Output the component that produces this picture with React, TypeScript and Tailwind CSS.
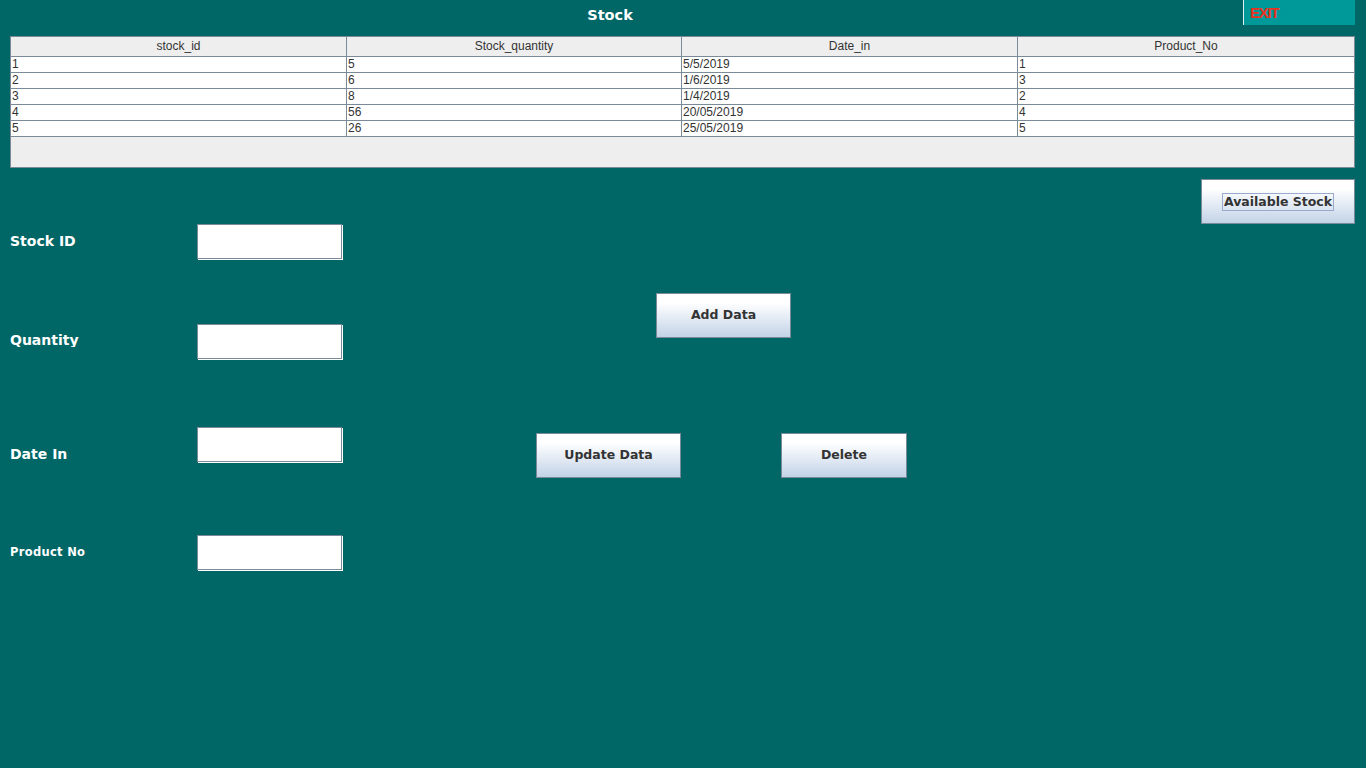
import React from "react";

const rows = [
  ["1", "5", "5/5/2019", "1"],
  ["2", "6", "1/6/2019", "3"],
  ["3", "8", "1/4/2019", "2"],
  ["4", "56", "20/05/2019", "4"],
  ["5", "26", "25/05/2019", "5"],
];

const headers = ["stock_id", "Stock_quantity", "Date_in", "Product_No"];

const btn =
  "border border-[#7a8a99] bg-gradient-to-b from-white from-20% to-[#c3d3e7] font-bold text-[#333333] [font-family:'DejaVu_Sans',sans-serif]";

const Field = ({ label, labelClass = "" }: { label: string; labelClass?: string }) => (
  <div className="flex h-[35px] items-center">
    <div className={`w-[197px] shrink-0 pl-[10px] font-bold text-white [font-family:'DejaVu_Sans',sans-serif] ${labelClass}`}>{label}</div>
    <input className="h-[35px] w-[145px] shrink-0 border border-[#7a8a99] bg-white shadow-[1px_1px_0_#ffffff] outline-none" />
  </div>
);

export default function App() {
  return (
    <div className="h-[768px] w-[1366px] overflow-hidden bg-[#006666] [font-family:'Liberation_Sans',Arial,sans-serif]">
      {/* title bar */}
      <div className="flex h-[36px]">
        <div className="w-[1243px] pr-[23px] pt-[5px] text-center text-[14.5px] font-bold text-white [font-family:'DejaVu_Sans',sans-serif]">Stock</div>
        <button className="h-[25px] w-[112px] border-l border-[#e6f2f2] bg-[#009999] pl-[6px] text-left text-[15px] font-bold leading-[25px] tracking-[-1.2px] text-[#e8321e]">
          EXIT
        </button>
      </div>

      {/* table */}
      <div className="mx-[10px] h-[132px] w-[1345px] border border-[#7a8a99] bg-[#eeeeee]">
        <div className="grid h-[20px] grid-cols-[336px_335px_336px_1fr] border-b border-[#7a8a99] bg-[#eeeeee]">
          {headers.map((h, i) => (
            <div key={h} className={`text-center text-[12px] leading-[19px] text-[#333333] ${i < 3 ? "border-r border-[#7a8a99]" : ""}`}>
              {h}
            </div>
          ))}
        </div>
        {rows.map((r) => (
          <div key={r[0]} className="grid h-[16px] grid-cols-[336px_335px_336px_1fr] border-b border-[#7a8a99] bg-white">
            {r.map((c, i) => (
              <div key={i} className={`pl-[1px] text-[12px] leading-[15px] text-[#333333] ${i < 3 ? "border-r border-[#7a8a99]" : ""}`}>
                {c}
              </div>
            ))}
          </div>
        ))}
      </div>

      {/* form */}
      <div className="flex">
        <div className="flex w-[342px] shrink-0 flex-col pt-[56px]">
          <Field label="Stock ID" labelClass="text-[14px]" />
          <div className="h-[65px]" />
          <Field label="Quantity" labelClass="text-[14px] self-start mt-[9px] h-[14px] overflow-hidden leading-[14px]" />
          <div className="h-[68px]" />
          <Field label="Date In" labelClass="text-[14px] pt-[20px]" />
          <div className="h-[73px]" />
          <Field label="Product No" labelClass="text-[11.5px] tracking-[0.3px]" />
        </div>

        <div className="flex flex-col pt-[125px]">
          <button className={`ml-[314px] h-[45px] w-[135px] text-[12.5px] ${btn}`}>Add Data</button>
          <div className="mt-[95px] flex">
            <button className={`ml-[194px] h-[45px] w-[145px] text-[12.5px] ${btn}`}>Update Data</button>
            <button className={`ml-[100px] h-[45px] w-[126px] text-[12.5px] ${btn}`}>Delete</button>
          </div>
        </div>

        <div className="ml-auto mr-[11px] pt-[11px]">
          <button className={`flex h-[45px] w-[154px] items-center justify-center text-[12.5px] ${btn}`}>
            <span className="border border-[#99aacc] px-[1px] leading-[16px]">Available Stock</span>
          </button>
        </div>
      </div>
    </div>
  );
}
